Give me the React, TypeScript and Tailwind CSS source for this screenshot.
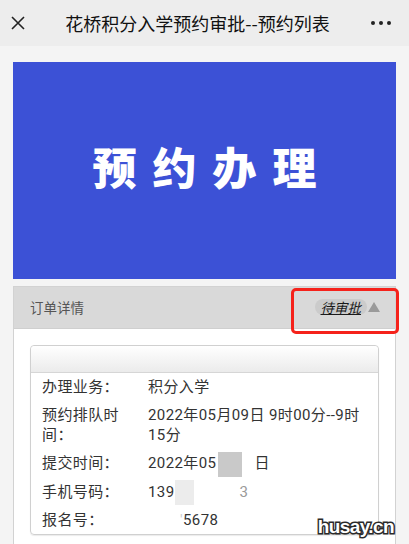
import React from 'react'

const rows: { label: string; value: React.ReactNode }[] = [
    { label: '办理业务：', value: '积分入学' },
    { label: '预约排队时间：', value: '2022年05月09日 9时00分--9时15分' },
    {
        label: '提交时间：',
        value: (
            <>
                2022年05
                <span className="inline-block w-[24px] h-[25px] bg-[#c9c9c9] align-middle -my-[3px] ml-[2px]" />
                <span className="inline-block w-[12px]" />日
            </>
        ),
    },
    {
        label: '手机号码：',
        value: (
            <>
                139
                <span className="inline-block w-[19px] h-[25px] bg-[#ececec] align-middle -my-[3px]" />
                <span className="inline-block w-[46px]" />
                <span className="text-[#9a9a9a]">3</span>
            </>
        ),
    },
    {
        label: '报名号：',
        value: (
            <>
                <span className="inline-block w-[35px] text-right text-[#ccc]">'</span>5678
            </>
        ),
    },
]

const App: React.FC = () => {
    return (
        <div className="relative w-[409px] h-[544px] overflow-hidden bg-[#f4f4f4] font-['Roboto','Noto_Sans_CJK_SC',sans-serif] text-[#333]">
            {/* top bar */}
            <div className="h-[46px] bg-[#ededed] flex items-center pl-[11px] pr-[18px]">
                <svg width="14" height="14" viewBox="0 0 14 14" className="shrink-0">
                    <path d="M1 1 L13 13 M13 1 L1 13" stroke="#222" strokeWidth="1.6" fill="none" />
                </svg>
                <div className="flex-1 text-center text-[18px] font-normal text-[#111] font-['Noto_Sans_CJK_SC',sans-serif] -ml-[1px]">
                    花桥积分入学预约审批--预约列表
                </div>
                <div className="flex gap-[4px] shrink-0">
                    <span className="w-[4px] h-[4px] rounded-full bg-[#222]" />
                    <span className="w-[4px] h-[4px] rounded-full bg-[#222]" />
                    <span className="w-[4px] h-[4px] rounded-full bg-[#222]" />
                </div>
            </div>

            <div className="px-[13px] pt-[16px]">
                {/* banner */}
                <div className="h-[217px] bg-[#3c51d6] flex items-center justify-center pb-[9px]">
                    <span className="pl-[16px] text-white text-[44px] font-black leading-none tracking-[16px] font-['Noto_Sans_CJK_SC',sans-serif]">
                        预约办理
                    </span>
                </div>

                {/* order panel */}
                <div className="relative mt-[7px] border border-[#d2d2d2]">
                    <div className="h-[42px] bg-[#d9d9d9] border-b border-[#cfcfcf] flex items-center justify-between pl-[16px] pr-[15px]">
                        <span className="text-[13.5px] text-[#555] font-['Noto_Sans_CJK_SC',sans-serif]">订单详情</span>
                        <div className="flex items-center gap-[1px] -mt-[1px]">
                            <span className="h-[16px] px-[6px] rounded-full bg-[#cbcbcb] flex items-center text-[13.5px] italic underline text-[#1a1a1a] font-['Noto_Sans_CJK_SC',sans-serif]">
                                待审批
                            </span>
                            <svg width="12" height="10" viewBox="0 0 12 10">
                                <polygon points="6,0 12,10 0,10" fill="#9a9a9a" />
                            </svg>
                        </div>
                    </div>
                    <div className="absolute left-[277px] top-[1px] w-[108px] h-[46px] border-[3px] border-[#f5221b] rounded-[5px]" />

                    <div className="bg-white px-[16px] pt-[16px] pb-[20px]">
                        <div className="rounded-[4px] border border-[#d0d0d0] shadow-[0_1px_1px_rgba(0,0,0,0.08)]">
                            <div className="h-[27px] rounded-t-[4px] bg-gradient-to-b from-white to-[#ebebeb] border-b border-[#d6d6d6]" />
                            <div>
                                {rows.map((r) => (
                                    <div key={r.label} className="flex py-[4px] text-[15px] leading-[20px] tracking-[0.4px]">
                                        <div className="w-[117px] pl-[11px] pr-[14px] shrink-0">{r.label}</div>
                                        <div className="w-[224px] whitespace-pre-wrap">{r.value}</div>
                                    </div>
                                ))}
                            </div>
                        </div>
                    </div>
                </div>
            </div>

            {/* watermark */}
            <div className="absolute right-[15px] bottom-[8px] text-[19px] font-bold tracking-[-0.6px] text-white font-['Liberation_Sans',sans-serif] [-webkit-text-stroke:3px_#2a2a2a] [paint-order:stroke_fill] leading-none">
                husay.cn
            </div>
        </div>
    )
}

export default App
